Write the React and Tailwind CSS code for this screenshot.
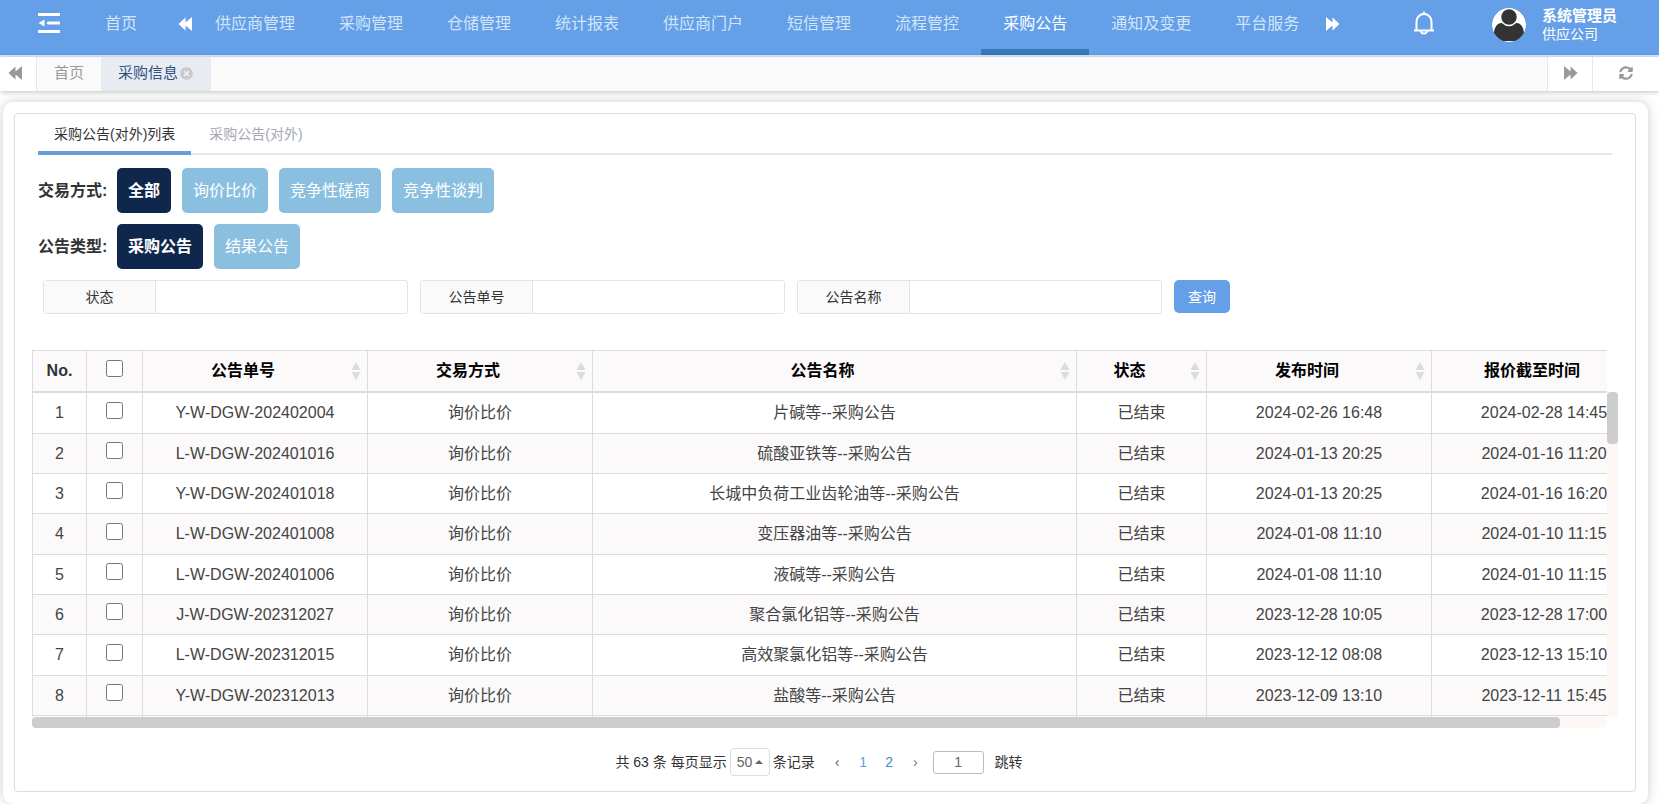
// Import icon
import { FaSyncAlt, FaTimesCircle } from "react-icons/fa";

const menus = [
    "供应商管理", "采购管理", "仓储管理", "统计报表", "供应商门户",
    "短信管理", "流程管控", "采购公告", "通知及变更", "平台服务",
];

const rows = [
    ["Y-W-DGW-202402004", "询价比价", "片碱等--采购公告", "已结束", "2024-02-26 16:48", "2024-02-28 14:45"],
    ["L-W-DGW-202401016", "询价比价", "硫酸亚铁等--采购公告", "已结束", "2024-01-13 20:25", "2024-01-16 11:20"],
    ["Y-W-DGW-202401018", "询价比价", "长城中负荷工业齿轮油等--采购公告", "已结束", "2024-01-13 20:25", "2024-01-16 16:20"],
    ["L-W-DGW-202401008", "询价比价", "变压器油等--采购公告", "已结束", "2024-01-08 11:10", "2024-01-10 11:15"],
    ["L-W-DGW-202401006", "询价比价", "液碱等--采购公告", "已结束", "2024-01-08 11:10", "2024-01-10 11:15"],
    ["J-W-DGW-202312027", "询价比价", "聚合氯化铝等--采购公告", "已结束", "2023-12-28 10:05", "2023-12-28 17:00"],
    ["L-W-DGW-202312015", "询价比价", "高效聚氯化铝等--采购公告", "已结束", "2023-12-12 08:08", "2023-12-13 15:10"],
    ["Y-W-DGW-202312013", "询价比价", "盐酸等--采购公告", "已结束", "2023-12-09 13:10", "2023-12-11 15:45"],
];

const columns = ["公告单号", "交易方式", "公告名称", "状态", "发布时间", "报价截至时间"];

const Backward = ({ className }) => (
    <svg className={className} width="15" height="14" viewBox="0 0 15 14" fill="currentColor" aria-hidden="true">
        <path d="M7.5 0.5v5L14 0v14L7.5 8.5v5L0.5 7z" />
    </svg>
);

const Forward = ({ className }) => (
    <svg className={className} width="15" height="14" viewBox="0 0 15 14" fill="currentColor" aria-hidden="true">
        <path d="M7.5 0.5v5L1 0v14L7.5 8.5v5L14.5 7z" />
    </svg>
);

const FoldIcon = () => (
    <svg width="22" height="20" viewBox="0 0 22 20" fill="currentColor" aria-hidden="true">
        <rect width="22" height="3" />
        <rect x="9" y="8.500" width="13" height="3" rx="1" />
        <rect y="17" width="22" height="3" />
        <path d="M0.5 10L6.5 6.500v7z" />
    </svg>
);

const BellIcon = () => (
    <svg width="22" height="24" viewBox="0 0 22 24" fill="none" stroke="currentColor" strokeWidth="2" aria-hidden="true">
        <path d="M1 19.5h20M3.5 19.5V10.500a7.500 7.500 0 0 1 15 0v9" />
        <path d="M11 0.500v2.500" />
        <path d="M8 20a3 2.500 0 0 0 6 0" />
    </svg>
);

const Avatar = () => (
    <svg className="rounded-full" width="34" height="34" viewBox="0 0 34 34" aria-hidden="true">
        <circle cx="17" cy="17" r="17" fill="#fff" />
        <path d="M2 26c0-6 2.500-10.500 7.500-11h15c5 .5 7.500 5 7.500 11-2 3-5 5-7 7H9c-2-2-5-4-7-7z" fill="#333" />
        <circle cx="17" cy="9" r="8.500" fill="#333" stroke="#fff" strokeWidth="1.500" />
    </svg>
);

const SortIcon = () => (
    <svg width="10" height="18" viewBox="0 0 10 18" fill="#dcdcdc" aria-hidden="true">
        <path d="M5 0l4.500 8h-9zM5 18l4.500-8h-9z" />
    </svg>
);

const Header = () => (
    <header className="flex h-[57px] border-b-2 border-[#d9e9fb] bg-[#649fe8] text-[#d2e5fa]">
        <button type="button" aria-label="收起菜单" className="ml-[38px] mb-[9px] text-white"><FoldIcon /></button>
        <a href="#home" className="ml-[23px] flex h-[54px] items-center border-b-6 border-transparent px-[22px]">首页</a>
        <button type="button" aria-label="向左" className="ml-[19px] mb-[7px] text-white"><Backward /></button>
        <nav>
            <ul className="flex whitespace-nowrap">
                {menus.map((m) => (
                    <li key={m}>
                        <a
                            href="#menu"
                            className={m === "采购公告"
                                ? "flex h-[55px] items-center border-b-6 border-[#337ab7] px-[22px] pb-px text-white"
                                : "flex h-[55px] items-center border-b-6 border-transparent px-[22px] pb-px"}
                        >
                            {m}
                        </a>
                    </li>
                ))}
            </ul>
        </nav>
        <button type="button" aria-label="向右" className="ml-1 mb-[7px] text-white"><Forward /></button>
        <button type="button" aria-label="消息" className="ml-auto mb-[9px] text-white"><BellIcon /></button>
        <div className="ml-[57px] mr-[42px] flex items-center gap-4 whitespace-nowrap pb-[5px] text-white">
            <Avatar />
            <div className="text-sm leading-[18px]">
                <div className="text-[15px] font-bold">系统管理员</div>
                <div>供应公司</div>
            </div>
        </div>
    </header>
);

const PageTabs = () => (
    <div className="relative flex h-[34px] items-stretch bg-[#fafafa] text-[15px] text-[#999] shadow-[0_1px_5px_rgba(0,0,0,0.25)]">
        <button type="button" aria-label="向左滚动" className="w-[37px] border-r border-[#e8e8e8] bg-white pl-2 pb-0.5 text-[#999]"><Backward /></button>
        <a href="#home" className="flex items-center px-[17px] pb-0.5">首页</a>
        <div className="flex items-center gap-0.5 bg-[#e8ecf2] pl-[17px] pr-[18px] pb-0.5">
            <a href="#info" className="text-[#2f5080]">采购信息</a>
            <button type="button" aria-label="关闭"><FaTimesCircle className="size-[13px] text-[#c9c9c9]" /></button>
        </div>
        <button type="button" aria-label="向右滚动" className="ml-auto flex w-[46px] items-center justify-center border-x border-[#e8e8e8] bg-white pb-0.5"><Forward /></button>
        <button type="button" aria-label="刷新" className="flex w-[66px] items-center bg-white pl-[26px] pb-0.5"><FaSyncAlt className="size-[14px]" /></button>
    </div>
);

const Filter = ({ label, options }) => (
    <div className="flex items-center">
        <span className="w-[79px] font-bold">{label}:</span>
        <div className="flex gap-[11px]">
            {options.map((o, i) => (
                <button
                    key={o}
                    type="button"
                    className={i === 0
                        ? "h-[45px] rounded-[5px] bg-[#10274d] px-[11px] font-bold text-white"
                        : "h-[45px] rounded-[5px] bg-[#8abfe0] px-[11px] text-white"}
                >
                    {o}
                </button>
            ))}
        </div>
    </div>
);

const Field = ({ id, label }) => (
    <div className="flex h-[34px] w-[365px] rounded-[3px] border border-[#e4e4e4]">
        <label htmlFor={id} className="flex w-[112px] shrink-0 items-center justify-center border-r border-[#e4e4e4] bg-[#fafafa]">{label}</label>
        <input id={id} type="text" className="min-w-0 flex-1 px-2 outline-none" />
    </div>
);

const Table = () => (
    <div className="mx-[17px] mt-9 grid grid-cols-[minmax(0,1fr)_11px]">
        <div className="overflow-hidden border-l border-t border-[#dcdcdc]">
            <table className="w-[1624px] min-w-full table-fixed border-separate border-spacing-0 text-center text-[16px] leading-6 text-[#333]">
                <colgroup>
                    <col className="w-[54px]" />
                    <col className="w-[56px]" />
                    <col className="w-[225px]" />
                    <col className="w-[225px]" />
                    <col />
                    <col className="w-[130px]" />
                    <col className="w-[225px]" />
                    <col className="w-[225px]" />
                </colgroup>
                <thead className="bg-[#fbf9fa]">
                    <tr className="h-[42px]">
                        <th className="border-b-2 border-r border-[#dcdcdc] p-0">No.</th>
                        <th className="border-b-2 border-r border-[#dcdcdc] p-0">
                            <input type="checkbox" aria-label="全选" className="mx-auto mb-1.5 block size-[17px]" />
                        </th>
                        {columns.map((c) => (
                            <th key={c} className="border-b-2 border-r border-[#dcdcdc] p-0 text-black">
                                <div className="flex items-center pr-1.5">
                                    <span className="flex-1 pr-2">{c}</span>
                                    <SortIcon />
                                </div>
                            </th>
                        ))}
                    </tr>
                </thead>
                <tbody className="text-[#444]">
                    {rows.map((row, i) => (
                        <tr key={row[0]} className="h-[40px] nth-[3n+1]:h-[41px] even:bg-[#fbf9fa]">
                            <td className="border-b border-r border-[#dcdcdc] p-0">{i + 1}</td>
                            <td className="border-b border-r border-[#dcdcdc] p-0">
                                <input type="checkbox" aria-label={"选择 " + row[0]} className="mx-auto mb-1.5 block size-[17px]" />
                            </td>
                            {row.map((cell, j) => (
                                <td key={j} className="border-b border-r border-[#dcdcdc] p-0">{cell}</td>
                            ))}
                        </tr>
                    ))}
                    <tr className="h-px">
                        {["no", "check", ...columns].map((c) => (
                            <td key={c} className="border-r border-[#dcdcdc] p-0" />
                        ))}
                    </tr>
                </tbody>
            </table>
        </div>
        <div className="mt-[42px] rounded-md bg-[#fdf6f4]">
            <div className="h-[52px] rounded-[4px] bg-[#cdcdcd]" />
        </div>
        <div className="h-[11px] rounded-md bg-[#fdf6f4]">
            <div className="h-full w-[97%] rounded-[4px] bg-[#cdcdcd]" />
        </div>
    </div>
);

const Pagination = () => (
    <div className="mx-[17px] mt-5 flex h-7 items-center justify-center whitespace-nowrap pr-3 text-sm text-[#333]">
        <label htmlFor="pageSize">共 63 条 每页显示</label>
        <div className="relative mx-[3px]">
            <select id="pageSize" defaultValue="50" className="h-7 w-10 appearance-none rounded-[4px] border border-[#ddd] bg-white pl-1.5 text-[#666]">
                <option>50</option>
            </select>
            <span className="pointer-events-none absolute right-[7px] top-3 border-x-4 border-b-4 border-x-transparent border-b-[#666]" />
        </div>
        <span>条记录</span>
        <a href="#prev" className="ml-5 text-[#666]">‹</a>
        <a href="#p1" className="ml-5 text-[#5b9be0]">1</a>
        <a href="#p2" className="ml-[18px] text-[#428bca]">2</a>
        <a href="#next" className="ml-5 text-[#4f7ba8]">›</a>
        <input type="text" aria-label="页码" defaultValue="1" className="ml-[15px] h-[23px] w-[51px] rounded-[3px] border border-[#bbb] text-center text-[#666]" />
        <button type="button" className="ml-[11px]">跳转</button>
    </div>
);

const App = () => {
    return (
        <div className="min-h-screen bg-white font-['Liberation_Sans','Noto_Sans_CJK_SC',sans-serif] text-[16px] text-[#333]">
            <Header />
            <PageTabs />
            <main className="pt-[11px] pl-[3px] pr-[11px]">
                <section className="rounded-[10px] bg-white pt-[11px] pr-3 pb-3 pl-[11px] shadow-[0_0_12px_rgba(0,0,0,0.2)]">
                    <div className="rounded-[4px] border border-[#dcdcdc] pb-[15px]">
                        <div className="mx-[23px] flex h-[41px] border-b-2 border-[#e4e7ed] text-sm">
                            <a href="#list" className="flex h-[41px] items-center border-b-4 border-[#659fd6] px-4 pt-[3px]">采购公告(对外)列表</a>
                            <a href="#out" className="flex h-[37px] items-center px-[18px] pt-[3px] text-[#a3a8b4]">采购公告(对外)</a>
                        </div>
                        <div className="mx-[23px] mt-[13px] flex flex-col gap-[11px]">
                            <Filter label="交易方式" options={["全部", "询价比价", "竞争性磋商", "竞争性谈判"]} />
                            <Filter label="公告类型" options={["采购公告", "结果公告"]} />
                            <form className="ml-[5px] flex gap-3 text-sm">
                                <Field id="status" label="状态" />
                                <Field id="noticeNo" label="公告单号" />
                                <Field id="noticeName" label="公告名称" />
                                <button type="button" className="h-[33px] w-14 rounded-[5px] bg-[#649fe8] text-white">查询</button>
                            </form>
                        </div>
                        <Table />
                        <Pagination />
                    </div>
                </section>
            </main>
        </div>
    );
};

export default App
